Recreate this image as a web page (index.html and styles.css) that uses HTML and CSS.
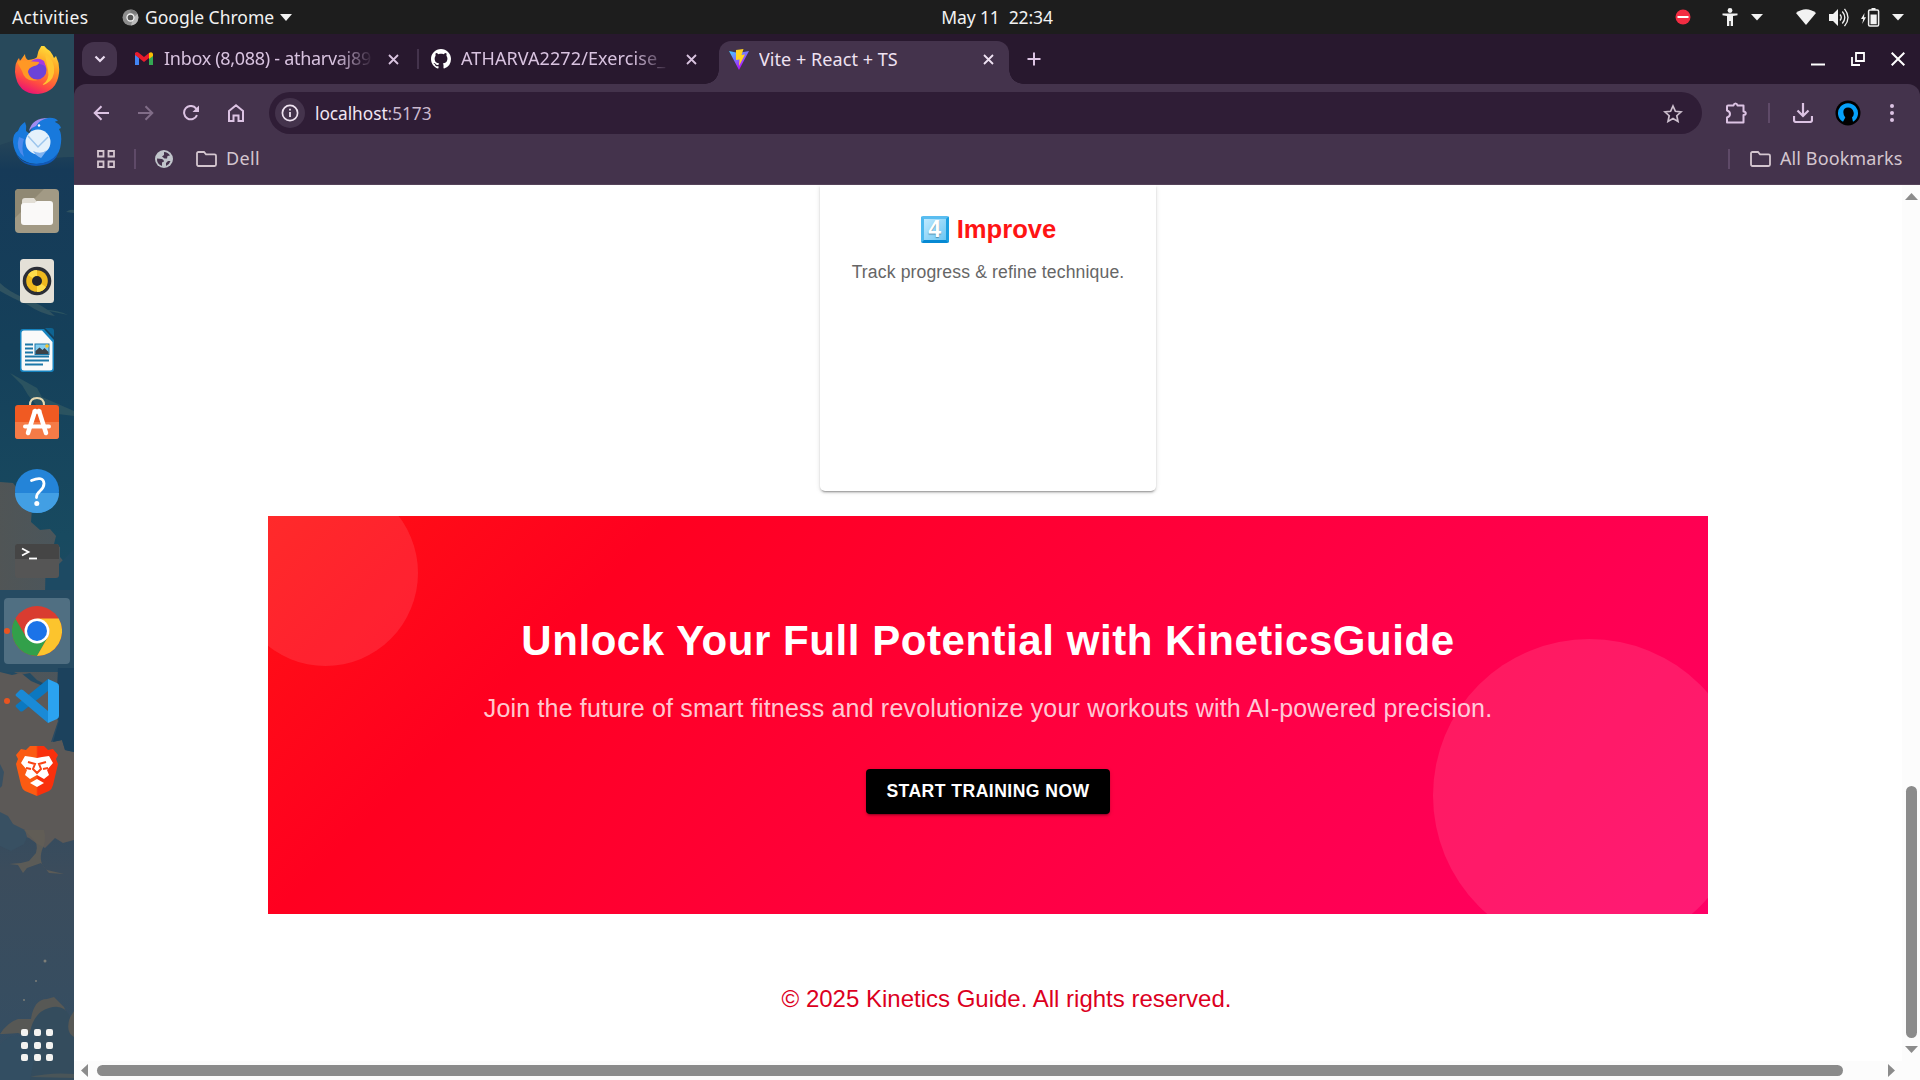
FILE: index.html
```html
<!DOCTYPE html>
<html lang="en">
<head>
<meta charset="utf-8">
<title>Vite + React + TS</title>
<link rel="stylesheet" href="styles.css">
</head>
<body>
<div class="desktop">
  <header class="topbar">
    <div class="topbar-left">
      <span class="t-activities">Activities</span>
      <svg class="t-appicon" width="17" height="17" viewBox="0 0 17 17"><circle cx="8.5" cy="8.5" r="8" fill="#8d8d8d"/><path d="M8.500.5a8 8 0 0 1 7 4H8.500z" fill="#777"/><path d="M9 16.500A8 8 0 0 0 15.500 5L11 9z" fill="#bbb"/><circle cx="8.500" cy="8.500" r="3.500" fill="#555" stroke="#f2f2f2" stroke-width="1.300"/></svg>
      <span class="t-appname">Google Chrome</span>
      <svg width="12" height="7" viewBox="0 0 12 7"><path d="M0 0h12L6 7z" fill="#f2f2f2"/></svg>
    </div>
    <div class="t-clock">May 11&nbsp; 22:34</div>
    <div class="topbar-right">
      <svg width="16" height="16" viewBox="0 0 16 16"><circle cx="8" cy="8" r="7.500" fill="#f22c42"/><path d="M2.500 7h11v2h-11z" fill="#fff"/></svg>
      <svg class="i-access" width="16" height="18" viewBox="0 0 16 18"><circle cx="8" cy="2.500" r="2.400" fill="#f2f2f2"/><path d="M.5 5.500h15v1.700l-4.500.8v10H8.700v-5H7.300v5H5V8L.5 7.200z" fill="#f2f2f2"/></svg>
      <svg class="i-tri1" width="12" height="7" viewBox="0 0 12 7"><path d="M0 0h12L6 6.500z" fill="#f2f2f2"/></svg>
      <svg class="i-wifi" width="20" height="16" viewBox="0 0 20 16"><path d="M0 4Q10-3.500 20 4L10 16z" fill="#f2f2f2"/></svg>
      <svg class="i-vol" width="20" height="19" viewBox="0 0 20 19"><path d="M0 6h4l5-5v17l-5-5H0z" fill="#f2f2f2"/><path d="M11 6.500q2.500 3 0 6M13.300 3.500q5 6 0 12M15.500.8q7 8.700 0 17.400" fill="none" stroke="#f2f2f2" stroke-width="1.300"/></svg>
      <svg class="i-bat" width="19" height="19" viewBox="0 0 19 19"><path d="M3.500 5 0 11h2.200l-1 5L5 9.300H3z" fill="#f2f2f2"/><rect x="7.600" y="2" width="10" height="16" rx="1.300" fill="none" stroke="#f2f2f2" stroke-width="1.500"/><path d="M10.500 0h4v2h-4zM9.500 6.500h6.200v9.800H9.500z" fill="#f2f2f2"/></svg>
      <svg class="i-tri2" width="12" height="7" viewBox="0 0 12 7"><path d="M0 0h12L6 6.500z" fill="#f2f2f2"/></svg>
    </div>
  </header>

  <div class="workspace">
    <nav class="dock">
      <svg class="wallpaper" width="74" height="1046" viewBox="0 34 74 1046">
        <defs>
          <linearGradient id="sky" x1="0" y1="0" x2="0" y2="1"><stop offset="0" stop-color="#2b4b60"/><stop offset=".1" stop-color="#264558"/><stop offset=".13" stop-color="#163a58"/><stop offset=".3" stop-color="#15405a"/><stop offset=".48" stop-color="#184a60"/><stop offset=".65" stop-color="#264a63"/><stop offset=".8" stop-color="#3b4c5c"/><stop offset="1" stop-color="#344e63"/></linearGradient>
          <linearGradient id="haze" x1="0" y1="0" x2="1" y2="0"><stop offset="0" stop-color="#5a5754"/><stop offset="1" stop-color="#52585c"/></linearGradient>
        </defs>
        <path d="M0 34h74v1046H0z" fill="url(#sky)"/>
        <path d="M0 34h74v123q-22 0-34 4-13-16-28-20L0 145z" fill="#28495b"/>
        <path d="M66 212q4-3 8-2v3zM0 283q8 8 24 15 20 7 31 18-14-2-27-11Q10 297 0 291z" fill="#2f5260"/>
        <path d="M44 310q14 0 24 5zM10 373l27 15 5 9 32 14v5l-24-3-14-8-8-10-6-10z" fill="#2b5360"/>
        <path d="M0 482l13 1 6 8 9 3 4 14-1 14 9 8 10-1 6 7-2 8 6 3 0 10 5 6 9-7V700l-10-12-5 4-6-5-8-3-8-4-7-7-10 2-10-5-10 2z" fill="url(#haze)" opacity=".85"/>
        <path d="M46 552l9 1 3 12 16-16V660q-9-10-18-8l-12-16z" fill="#1d4a63"/>
        <path d="M0 590h74v82H0z" fill="#264b62"/>
        <path d="M0 672l12 3 9-2 10 8 14 6 5 5 5-3-1 22 4 10-7 21 11-2 3 10 9 2v88l-11 3-8-5-10 10-9-5-7-5-10-4-19 2z" fill="#5c5957"/>
        <path d="M58 668h16v84l-9-2-3-10-9 2 6-21-3-10z" fill="#1c425d"/>
        <path d="M0 764l4 8-2 14-2 2zM0 812l8 4 5 8 12 6 2 7-3 7-13 7-11-5z" fill="#385062"/>
        <path d="M24 830h20q3 11-2 20-4 13 5 20l17 4-15-1-8-10-14 5-4 5-5-8-9-1 12-1 8-2 7-8q3-10-4-15z" fill="#625e56" opacity=".85"/>
        <path d="M0 1034q8-12 18-15h13q3-20 16-20l7-2 10 10 5 12 5-8v30H30q-4-6-12-8-12 1-18 1z" fill="#575855"/>
        <path d="M30 1032q4-20 19-24 15-5 21 9-5 15 4 20v43H30z" fill="#344c5d"/>
        <path d="M0 1045q8-11 21-9 10 0 9-6l8 10-8 40H0z" fill="#334e62"/>
        <path d="M30 1077q20-5 44-3v4z" fill="#4a5558"/>
        <g fill="#7d7e78"><circle cx="45" cy="961" r="1.500"/><circle cx="36" cy="981" r="1"/><circle cx="24" cy="1000" r="1"/></g>
      </svg>

      <a class="app"><svg width="50" height="50" viewBox="0 -1 50 50">
        <defs><linearGradient id="ff" x1=".7" y1="0" x2=".3" y2="1"><stop offset="0" stop-color="#ffe63c"/><stop offset=".4" stop-color="#ff9a24"/><stop offset=".75" stop-color="#ff4a42"/><stop offset="1" stop-color="#e80f78"/></linearGradient></defs>
        <path d="M3 25q0-10 4-14l1 3 5-7q0 4 3 6 8-1 9-3 1-8 6-13 2 4 7 7 3 4 4 7l2-2q4 8 3 17-2 19-21 21Q5 47 3 25z" fill="url(#ff)"/>
        <circle cx="25" cy="23" r="9.500" fill="#6c43d8"/><path d="M18 15q7-6 14-1l3 9q-2-6-8-6l-5 2z" fill="#a43be0"/>
        <path d="M5 15q4-3 10-1l12 1q0 3-5 4-6 2-6 6 1 7 10 8-13 3-16-9z" fill="#ff9825"/>
        <path d="M33 6q11 8 9 20-2 10-12 12 8-5 6-15-2-9-3-17z" fill="#ffc531"/></svg></a>

      <a class="app"><svg width="52" height="52" viewBox="0 0 52 52">
        <path d="M2 27q0-9 5-11 2-6 7-9 2 4 1 9l4 3q2-13 17-16 8-1 11 3-3 0-3 1 5 2 6 6l-2 1q3 5 2 14-2 20-24 21Q4 48 2 27z" fill="#1879dc"/>
        <path d="M18 16Q21 3 37 3q-9 2-12 8-4 1-7 5z" fill="#a18cf0"/>
        <path d="M4 34q3 14 20 15 15 0 23-11-3 12-22 13Q7 50 4 34z" fill="#115ab8"/>
        <path d="M8 22q-4 12 5 20-3-10 0-18z" fill="#4c8aec"/>
        <circle cx="27" cy="27" r="12.500" fill="#e5f1fb"/><path d="M17 21l10 11 10-10" fill="none" stroke="#9cc5ec" stroke-width="1.500"/><path d="M22 36q8 4 14-1-5 7-6 8-5-2-8-7z" fill="#7fb3f2"/><circle cx="28" cy="10.500" r="1.200" fill="#fff"/></svg></a>

      <a class="app"><svg width="44" height="44" viewBox="0 0 44 44"><rect width="44" height="44" rx="4" fill="#a29a85"/><path d="M4 0h25L0 29V4q0-4 4-4z" fill="#8f8873"/><path d="M7 12q0-3 3-3h9l3 4h-1L7 20z" fill="#e2ded5"/><path d="M6 17q0-3 3-3h10l3-2h13q3 0 3 3v18q0 3-3 3H9q-3 0-3-3z" fill="#faf9f8"/></svg></a>

      <a class="app"><svg width="36" height="44" viewBox="0 0 36 44"><rect x="1" width="34" height="44" rx="3.500" fill="#e4e0d7"/><circle cx="18" cy="22" r="14.300" fill="#2b2d35"/><circle cx="18" cy="22" r="10.800" fill="#efb91e"/><path d="M18 22l-9-6q3-5 9-5zM18 22l9 6q-3 5-9 5z" fill="#ffdd4a"/><circle cx="18" cy="22" r="5" fill="#22242b"/></svg></a>

      <a class="app"><svg width="36" height="46" viewBox="0 0 36 46"><path d="M4 1h21l10 11v29q0 3-3 3H4q-3 0-3-3V4q0-3 3-3z" fill="#1683bf"/><path d="M5 2.500h18L33.500 14v26q0 2.500-2.500 2.500H5Q2.500 42.500 2.500 40V5Q2.500 2.500 5 2.500z" fill="#fafafa"/><path d="M26 0h6q3 0 3 3v6z" fill="#0e6391"/><path d="M6 16.500h8M6 20.500h8M6 24.500h8M6 28.500h24M6 32.500h24M6 36.500h18" stroke="#1b77a8" stroke-width="2"/><rect x="16" y="16" width="14" height="10.500" fill="#83cdf0" stroke="#1b77a8"/><path d="M16.500 26v-3l4-3.500 3 2.500 2-2 4 4v2z" fill="#3a4148"/><circle cx="28" cy="18" r="1.800" fill="#f5c52a"/></svg></a>

      <a class="app app-store"><svg width="44" height="44" viewBox="0 0 44 44"><path d="M15 11V9q0-7 7-7t7 7v2" fill="none" stroke="#e6d8b0" stroke-width="2"/><rect y="9" width="44" height="34" rx="3" fill="#f05a22"/><path d="M0 26h44v14q0 3-3 3H3q-3 0-3-3z" fill="#f57b47"/><path d="M20 15 13 37M24 15l7 22M19.500 15.500h5" stroke="#fff" stroke-width="4.500" stroke-linecap="round"/><path d="M10 30.500h24" stroke="#fff" stroke-width="4" stroke-linecap="round"/></svg></a>

      <a class="app"><svg width="44" height="44" viewBox="0 0 44 44"><circle cx="22" cy="22" r="22" fill="#2484d8"/><path d="M0 24h44a22 20 0 0 1-44 0z" fill="#429fe4"/><path d="M16.500 11.500q12-5 12.500 3 0 4-4 7.500-3.500 3-3.500 6.500" fill="none" stroke="#fff" stroke-width="2.800" stroke-linecap="round"/><circle cx="21.800" cy="34.500" r="2.500" fill="#fff"/></svg></a>

      <a class="app"><svg width="44" height="34" viewBox="0 0 44 34"><rect width="44" height="34" rx="3" fill="#555"/><path d="M3 0h38q3 0 3 3v12H0V3q0-3 3-3z" fill="#454545"/><path d="M7 4.500l6.500 3.500L7 11.500" fill="none" stroke="#fff" stroke-width="1.800"/><path d="M14 14.500h8" stroke="#fff" stroke-width="1.800"/></svg></a>

      <a class="app app-active"><i class="run-dot"></i><svg width="50" height="50" viewBox="0 0 50 50"><circle cx="25" cy="25" r="25" fill="#d93c30"/><path d="M3.300 12.500A25 25 0 0 0 25 50l10.800-18.700L25 37.500 14.200 31.300z" fill="#32a04a"/><path d="M46.700 12.500A25 25 0 0 1 25 50l10.800-18.700q3-6 0-12.500L25 12.500z" fill="#fcc42d"/><circle cx="25" cy="25" r="12.500" fill="#fff"/><circle cx="25" cy="25" r="10" fill="#1b73e8"/></svg></a>

      <a class="app"><i class="run-dot"></i><svg width="44" height="44" viewBox="0 0 44 44"><path d="M33 0v12L8 32q-2 1-3 0l-4-4q-1-1 0-2z" fill="#0b78c0"/><path d="M33 44V32L8 11q-2-1-3 0l-4 4q-1 1 0 2z" fill="#1a8ad6"/><path d="M33 0l9 4q2 1 2 3v30q0 2-2 3l-9 4z" fill="#2ba3f0"/></svg></a>

      <a class="app"><svg width="42" height="50" viewBox="0 0 42 50"><defs><linearGradient id="br"><stop offset=".48" stop-color="#fb5b12"/><stop offset=".52" stop-color="#f9300c"/></linearGradient></defs><path d="M14 0h14l4 4 5-1 5 6-2 4 2 5-5 21q-1 4-4 6L21 50 9 45q-3-2-4-6L0 18l2-5-2-4 5-6 5 1z" fill="url(#br)"/><path d="M9 10l7 1 5 1 5-1 7-1 4 7-6 7 2 5-5 4-7-4-7 4-5-4 2-5-6-7z" fill="#fff"/><path d="M21 33l7 4-7 4-7-4z" fill="#fff"/><path d="M12 16l7 2-2 5 4 4 4-4-2-5 7-2M10 22l5 1M32 22l-5 1" fill="none" stroke="#f94413" stroke-width="2"/></svg></a>

      <a class="app-grid"><i></i><i></i><i></i><i></i><i></i><i></i><i></i><i></i><i></i></a>
    </nav>

    <main class="browser">
      <div class="tabstrip">
        <div class="tab-search"><svg width="12" height="8" viewBox="0 0 12 8"><path d="M1.500 1.500 6 6l4.500-4.500" fill="none" stroke="#eadcf0" stroke-width="2.200"/></svg></div>
        <div class="tab tab-1">
          <svg class="fav" width="20" height="20" viewBox="0 0 20 20"><path d="M1 4v12h4V9z" fill="#4285f4"/><path d="M15 9v7h4V4z" fill="#34a853"/><path d="M1 4q2-2 4 0l5 4 5-4v5l-5 4-5-4-4-3z" fill="#ea1b2c"/><path d="M15 4q3-2 4 1v2l-4 3z" fill="#fbbc04"/></svg>
          <span class="tab-title fade w1">Inbox (8,088) - atharvaj89</span>
          <svg class="x" width="11" height="11" viewBox="0 0 11 11"><path d="M1 1l9 9M10 1l-9 9" stroke="#d9c3e0" stroke-width="1.800"/></svg>
        </div>
        <div class="tab-sep"></div>
        <div class="tab tab-2">
          <svg class="fav" width="20" height="20" viewBox="0 0 16 16"><path fill="#fff" d="M8 0C3.580 0 0 3.580 0 8c0 3.540 2.290 6.530 5.470 7.590.4.070.55-.17.55-.38 0-.19-.01-.82-.01-1.490-2.010.37-2.530-.49-2.690-.94-.09-.23-.48-.94-.82-1.130-.28-.15-.68-.52-.01-.53.63-.01 1.080.58 1.230.82.72 1.210 1.870.87 2.330.66.070-.52.28-.87.51-1.070-1.780-.2-3.640-.89-3.640-3.950 0-.87.31-1.590.82-2.150-.08-.2-.36-1.020.08-2.120 0 0 .67-.21 2.200.82.64-.18 1.320-.27 2-.27s1.360.09 2 .27c1.530-1.040 2.200-.82 2.200-.82.44 1.100.16 1.920.08 2.120.51.56.82 1.270.82 2.150 0 3.070-1.870 3.750-3.650 3.950.29.25.54.73.54 1.480 0 1.070-.01 1.930-.01 2.200 0 .21.15.46.55.38A8.010 8.010 0 0 0 16 8c0-4.420-3.580-8-8-8z"/></svg>
          <span class="tab-title fade w2">ATHARVA2272/Exercise_</span>
          <svg class="x" width="11" height="11" viewBox="0 0 11 11"><path d="M1 1l9 9M10 1l-9 9" stroke="#d9c3e0" stroke-width="1.800"/></svg>
        </div>
        <div class="tab tab-3">
          <svg class="fav" width="20" height="21" viewBox="0 0 20 21"><defs><linearGradient id="vt" x1="0" y1="0" x2=".6" y2="1"><stop offset="0" stop-color="#41d1ff"/><stop offset="1" stop-color="#bd00ff"/></linearGradient></defs><path d="M0 2l9.500 2L20 2 10 21z" fill="url(#vt)"/><path d="M7 1l7.500-1-2 6 3.500-.5L10 17l.500-6.500L7 11z" fill="#ffd421"/></svg>
          <span class="tab-title w3">Vite + React + TS</span>
          <svg class="x" width="11" height="11" viewBox="0 0 11 11"><path d="M1 1l9 9M10 1l-9 9" stroke="#efe2f2" stroke-width="1.800"/></svg>
        </div>
        <svg class="newtab" width="14" height="14" viewBox="0 0 14 14"><path d="M7 .5v13M.5 7h13" stroke="#dcc3e3" stroke-width="2"/></svg>
        <div class="winctl">
          <svg width="14" height="14" viewBox="0 0 14 14"><path d="M0 12.500h14" stroke="#fff" stroke-width="2"/></svg>
          <svg width="14" height="14" viewBox="0 0 14 14"><path d="M5 1h8v8H5zM1 5v8h8" fill="none" stroke="#fff" stroke-width="1.800"/></svg>
          <svg width="14" height="14" viewBox="0 0 14 14"><path d="M.7.7l12.600 12.600M13.300.7.7 13.300" stroke="#fff" stroke-width="2"/></svg>
        </div>
      </div>

      <div class="chrome-bars">
        <div class="toolbar">
          <svg class="tb" width="16" height="16" viewBox="0 0 16 16"><path d="M16 8H2M8.500 1.200 1.700 8l6.800 6.800" fill="none" stroke="#dcc3e3" stroke-width="2"/></svg>
          <svg class="tb" width="16" height="16" viewBox="0 0 16 16"><path d="M0 8h14M7.500 1.200 14.300 8l-6.800 6.800" fill="none" stroke="#816d88" stroke-width="2"/></svg>
          <svg class="tb" width="16" height="16" viewBox="0 0 16 16"><path d="M14 10.200A6.700 6.700 0 1 1 13 3.400l2 2" fill="none" stroke="#dcc3e3" stroke-width="2"/><path d="M9.500 7H16V.5z" fill="#dcc3e3"/></svg>
          <svg class="tb" width="16" height="18" viewBox="0 0 16 18"><path d="M1 7l7-5.700L15 7v10h-4.500v-5.500h-5V17H1z" fill="none" stroke="#dcc3e3" stroke-width="2"/></svg>
          <div class="omnibox">
            <div class="site-info"><svg width="18" height="18" viewBox="0 0 18 18"><circle cx="9" cy="9" r="7.600" fill="none" stroke="#eee2f0" stroke-width="1.700"/><path d="M8.100 8h1.800v5H8.100zM8.100 4.800h1.800v1.800H8.100z" fill="#eee2f0"/></svg></div>
            <span class="url">localhost<b>:5173</b></span>
            <svg class="star" width="20" height="19" viewBox="0 0 20 19"><path d="M10 2l2.400 5.300 5.700.6-4.300 3.800 1.200 5.700-5-3-5 3 1.200-5.700L1.900 7.900l5.700-.6z" fill="none" stroke="#cdbfce" stroke-width="1.700"/></svg>
          </div>
          <div class="tools">
            <svg class="g1" width="22" height="22" viewBox="0 0 22 22"><path d="M3 3.500h5.500q.5-2 2-2t2 2h6V9.500q2.300.3 2.300 1.800t-2.300 1.800v7.400H2v-5q3-1 3-3.500T2 8.500v-4q0-1 1-1z" fill="none" stroke="#dcc3e3" stroke-width="2" stroke-linejoin="round"/></svg>
            <i class="vsep"></i>
            <svg class="g2" width="20" height="20" viewBox="0 0 20 20"><path d="M10 0v12M4.500 7.500 10 13l5.500-5.500M1 13v4q0 2 2 2h14q2 0 2-2v-4" fill="none" stroke="#dcc3e3" stroke-width="2.200"/></svg>
            <svg class="g3" width="26" height="26" viewBox="0 0 26 26"><circle cx="13" cy="13" r="12.500" fill="#000"/><path d="M8 21.800A10 10 0 1 1 18 21.800l-1-4.300q2.500-2.500 1.500-5.500-1-4.500-5.500-4.500T8.300 12q0 3 2 5.500z" fill="#06a0f8"/></svg>
            <svg class="g4" width="4" height="18" viewBox="0 0 4 18"><g fill="#dcc3e3"><circle cx="2" cy="2" r="2"/><circle cx="2" cy="9" r="2"/><circle cx="2" cy="16" r="2"/></g></svg>
          </div>
        </div>
        <div class="bookmarks">
          <svg width="18" height="18" viewBox="0 0 18 18"><path d="M1 1h5.500v5.500H1zM11.500 1H17v5.500h-5.500zM1 11.500h5.500V17H1zM11.500 11.500H17V17h-5.500z" fill="none" stroke="#d4c6cf" stroke-width="1.800"/></svg>
          <i class="vsep b1"></i>
          <svg class="b2" width="18" height="18" viewBox="0 0 18 18"><circle cx="9" cy="9" r="9" fill="#c1c5cb"/><path d="M2 8.500l5 .5q2 .5 2 2.500l-2 1v3.500Q1.500 14 2 8.500zM9 2q4 0 6 3.500l-2.500.5-.5 2.500H9.500L7 6.500 9 5zM15.500 11q-1 3.500-4.500 5v-3l2-2z" fill="#45334c"/></svg>
          <svg class="b3" width="21" height="16" viewBox="0 0 21 16"><path d="M1 13V2.500Q1 1 2.500 1H8l2 2.300h8.500q1.500 0 1.500 1.500V13.500Q20 15 18.500 15h-16Q1 15 1 13z" fill="none" stroke="#d4c6cf" stroke-width="1.800"/></svg>
          <span class="bm-dell">Dell</span>
          <i class="vsep b4"></i>
          <svg class="b5" width="21" height="16" viewBox="0 0 21 16"><path d="M1 13V2.500Q1 1 2.500 1H8l2 2.300h8.500q1.500 0 1.500 1.500V13.500Q20 15 18.500 15h-16Q1 15 1 13z" fill="none" stroke="#d4c6cf" stroke-width="1.800"/></svg>
          <span class="bm-all">All Bookmarks</span>
        </div>
      </div>

      <div class="viewport">
        <div class="page">
          <article class="card">
            <h3><span class="keycap">4</span>Improve</h3>
            <p>Track progress &amp; refine technique.</p>
          </article>
          <section class="banner">
            <i class="bubble bubble-a"></i>
            <i class="bubble bubble-b"></i>
            <h2>Unlock Your Full Potential with KineticsGuide</h2>
            <p>Join the future of smart fitness and revolutionize your workouts with AI-powered precision.</p>
            <button class="cta">START TRAINING NOW</button>
          </section>
          <footer class="foot">© 2025 Kinetics Guide. All rights reserved.</footer>
        </div>
        <div class="vbar">
          <svg width="13" height="7" viewBox="0 0 13 7"><path d="M0 7h13L6.500 0z" fill="#8b8b8b"/></svg>
          <i></i>
          <svg width="13" height="7" viewBox="0 0 13 7"><path d="M0 0h13L6.500 7z" fill="#8b8b8b"/></svg>
        </div>
        <div class="hbar">
          <svg width="7" height="13" viewBox="0 0 7 13"><path d="M7 0v13L0 6.500z" fill="#8b8b8b"/></svg>
          <i></i>
          <svg width="7" height="13" viewBox="0 0 7 13"><path d="M0 0v13l7-6.500z" fill="#8b8b8b"/></svg>
        </div>
        <div class="corner"></div>
      </div>
    </main>
  </div>
</div>
</body>
</html>
```
FILE: styles.css
```css
* { box-sizing: border-box; }
body { margin: 0; overflow: hidden; }
svg { display: block; flex: none; }
h2, h3, p { margin: 0; }

.desktop { width: 1920px; height: 1080px; display: flex; flex-direction: column; font-family: "Noto Sans", sans-serif; overflow: hidden; }

/* System bar */
.topbar { height: 34px; flex: none; display: grid; grid-template-columns: 937px 120px 1fr; align-items: center; background: #1d1d1d; color: #f2f2f2; font-size: 17.5px; line-height: 34px; white-space: nowrap; }
.topbar-left, .topbar-right { display: flex; align-items: center; }
.topbar-left { padding-left: 12px; }
.t-activities { width: 110px; letter-spacing: 0.35px; }
.t-appname { width: 130px; margin: 0 5px 0 6px; letter-spacing: 0; }
.t-clock { text-align: center; letter-spacing: -0.1px; }
.topbar-right { justify-content: flex-end; padding-right: 16px; }
.i-access { margin-left: 31px; }
.i-tri1 { margin-left: 13px; }
.i-wifi { margin-left: 33px; }
.i-vol { margin-left: 13px; }
.i-bat { margin-left: 12px; }
.i-tri2 { margin-left: 12px; }

.workspace { flex: 1; display: flex; min-height: 0; }

/* Dock */
.dock { position: relative; width: 74px; flex: none; display: flex; flex-direction: column; padding: 2px 0 19px; overflow: hidden; }
.wallpaper { position: absolute; left: 0; top: 0; }
.app { position: relative; height: 70px; flex: none; display: flex; align-items: center; justify-content: center; }
.app-store { padding-bottom: 6px; }
.app-active::before { content: ""; position: absolute; inset: 2px 4px; border-radius: 4px; background: rgba(190, 205, 215, 0.28); }
.app svg { position: relative; }
.run-dot { position: absolute; left: 4px; top: 32px; width: 6px; height: 6px; border-radius: 50%; background: #e95420; z-index: 1; }
.app-grid { position: relative; margin: auto auto 0; display: grid; grid-template-columns: repeat(3, 7px); gap: 5.5px; }
.app-grid i { height: 7px; border-radius: 2px; background: #f3f2f0; }

/* Browser */
.browser { flex: 1; display: flex; flex-direction: column; background: #28182e; min-width: 0; }
.tabstrip { height: 50px; flex: none; display: flex; align-items: center; padding-left: 8px; }
.tab-search { width: 35px; height: 34px; border-radius: 12px; background: #44334c; display: flex; align-items: center; justify-content: center; }
.tab { display: flex; align-items: center; color: #d9c3e0; font-size: 18px; white-space: nowrap; }
.fav { margin-right: 10px; }
.tab-title { overflow: hidden; line-height: 30px; margin-top: -2px; }
.tab-1 { margin-left: 17px; letter-spacing: -0.3px; }
.w1 { width: 210px; margin-right: 14px; }
.tab-sep { width: 2px; height: 20px; background: #44334c; margin: 0 12px 0 18px; }
.tab-2 { letter-spacing: 0.1px; }
.w2 { width: 209px; margin-right: 16px; }
.fade { -webkit-mask-image: linear-gradient(90deg, #000 82%, transparent); mask-image: linear-gradient(90deg, #000 82%, transparent); }
.tab-3 { position: relative; width: 290px; height: 43px; align-self: flex-end; margin-left: 22px; padding: 0 15px 6px 10px; border-radius: 12px 12px 0 0; background: #44334c; color: #efe2f2; letter-spacing: 0.05px; }
.tab-3::before, .tab-3::after { content: ""; position: absolute; bottom: 0; width: 14px; height: 14px; }
.tab-3::before { left: -14px; background: radial-gradient(circle at 0 0, transparent 13.5px, #44334c 14px); }
.tab-3::after { right: -14px; background: radial-gradient(circle at 100% 0, transparent 13.5px, #44334c 14px); }
.w3 { flex: 1; }
.newtab { margin-left: 18px; }
.winctl { margin-left: auto; display: flex; gap: 26px; padding-right: 15px; }

.chrome-bars { height: 101px; flex: none; background: #44334c; border-radius: 12px 12px 0 0; border-bottom: 1px solid #55435a; display: flex; flex-direction: column; }
.toolbar { display: flex; align-items: center; height: 58px; padding: 0 26px 0 19px; }
.tb { margin-right: 29px; }
.tb + .tb + .tb + .tb { margin-right: 25px; }
.omnibox { width: 1433px; height: 42px; flex: none; border-radius: 21px; background: #2f1d36; display: flex; align-items: center; padding: 0 19px 0 6px; }
.site-info { width: 30px; height: 30px; border-radius: 50%; background: #44334c; display: flex; align-items: center; justify-content: center; }
.url { margin-left: 10px; font-size: 17.3px; color: #f0e6f3; letter-spacing: -0.05px; }
.url b { font-weight: 400; color: #cbb9cf; }
.star { margin-left: auto; }
.tools { flex: 1; display: flex; align-items: center; padding-left: 23px; }
.vsep { width: 2px; height: 20px; background: #5f4a68; }
.tools .vsep { margin-left: 21px; }
.g2 { margin-left: 23px; }
.g3 { margin-left: 22px; }
.g4 { margin-left: auto; }
.bookmarks { flex: 1; display: flex; align-items: center; padding: 0 17px 9px 23px; font-size: 18px; line-height: 24px; color: #d4c6cf; }
.b1 { margin-left: 19px; }
.b2 { margin-left: 19px; }
.b3 { margin-left: 23px; }
.bm-dell, .bm-all { margin-top: -2px; letter-spacing: 0.1px; }
.bm-dell { margin-left: 9px; letter-spacing: 0.35px; }
.b4 { margin-left: auto; }
.b5 { margin-left: 20px; }
.bm-all { margin-left: 9px; width: 123px; white-space: nowrap; }

/* Page */
.viewport { flex: 1; min-height: 0; display: grid; grid-template: 1fr 19px / 1fr 18px; background: #fff; }
.page { display: flex; flex-direction: column; align-items: center; overflow: hidden; font-family: "Liberation Sans", Arial, sans-serif; }
.card { width: 336px; height: 306px; flex: none; padding-top: 24px; text-align: center; border-radius: 0 0 5px 5px; box-shadow: 0 3px 1px -2px rgba(0,0,0,.2), 0 2px 2px rgba(0,0,0,.14), 0 1px 5px rgba(0,0,0,.12); }
.card h3 { display: flex; justify-content: center; align-items: center; padding-left: 1px; font-size: 25.6px; line-height: 40px; color: #ff1414; }
.keycap { width: 28px; height: 27px; margin-right: 8px; border-radius: 2px; border: 3px solid; border-color: #5abdf0 #1b9fe0 #0689d3 #4db9ef; background: linear-gradient(135deg, #bfe9ff, #6cc6f2); color: #fff; font: 700 23px/21px "Liberation Sans", sans-serif; text-shadow: 0 1px 1px #528cab; }
.card p { margin-top: 10px; font-size: 17.6px; line-height: 26px; letter-spacing: .13px; color: #666; }
.banner { position: relative; width: 1440px; height: 398px; flex: none; margin-top: 25px; padding-top: 100px; display: flex; flex-direction: column; align-items: center; overflow: hidden; background: linear-gradient(135deg, #ff1212 0%, #ff0020 22%, #ff0066 100%); color: #fff; }
.bubble { position: absolute; border-radius: 50%; background: rgba(255,255,255,.1); }
.bubble-a { left: -35px; top: -36px; width: 185px; height: 186px; }
.bubble-b { left: 1165px; top: 123px; width: 313px; height: 313px; }
.banner h2 { position: relative; font-size: 42px; line-height: 50px; letter-spacing: .55px; }
.banner p { margin-top: 22px; font-size: 25px; line-height: 40px; letter-spacing: .18px; color: rgba(255,255,255,.8); }
.cta { margin-top: 41px; width: 244px; height: 45px; border: 0; border-radius: 4px; background: #000; color: #fff; font: 700 17.6px/26px "Liberation Sans", sans-serif; letter-spacing: .45px; padding: 0 0 2px; box-shadow: 0 3px 1px -2px rgba(0,0,0,.2), 0 2px 2px rgba(0,0,0,.14), 0 1px 5px rgba(0,0,0,.12); }
.foot { margin-top: 67px; padding-left: 37px; font-size: 24px; line-height: 36px; color: #dc001e; }

/* Scrollbars */
.vbar, .hbar, .corner { background: #fcfcfc; }
.vbar { display: flex; flex-direction: column; align-items: center; padding: 8px 0 8px 1px; }
.vbar i { width: 11px; height: 252px; margin: auto 0 8px; border-radius: 6px; background: #8b8b8b; }
.hbar { display: flex; align-items: center; padding: 0 7px; }
.hbar i { width: 1746px; height: 11px; margin: 0 auto 0 9px; border-radius: 6px; background: #8b8b8b; }
```
